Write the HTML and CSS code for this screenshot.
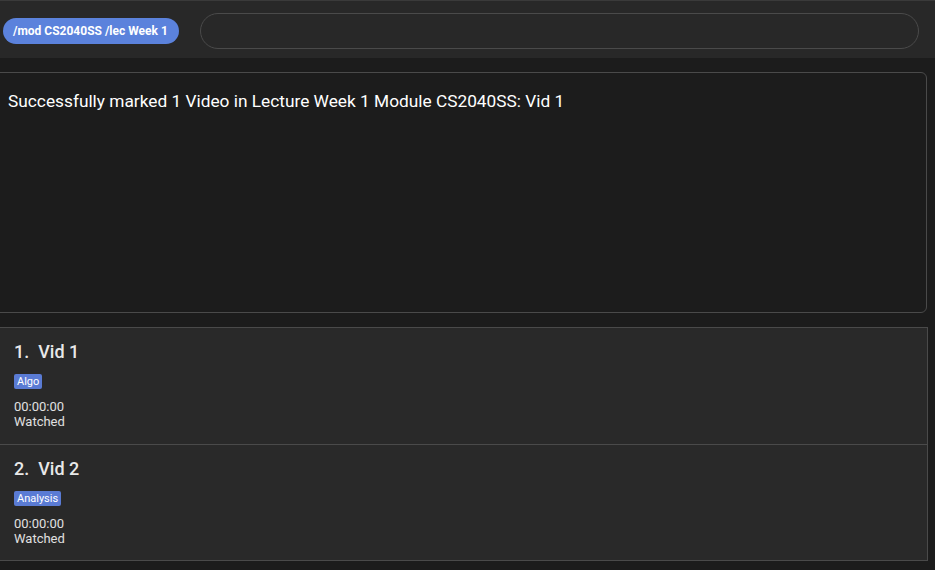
FILE: index.html
```html
<!DOCTYPE html>
<html>
<head>
<meta charset="utf-8">
<link rel="stylesheet" href="styles.css">
</head>
<body>
<div class="topbar">
  <div class="chip">/mod CS2040SS /lec Week 1</div>
  <div class="cmd-input"></div>
</div>
<div class="result">Successfully marked 1 Video in Lecture Week 1 Module CS2040SS: Vid 1</div>
<div class="list">
  <div class="card">
    <div class="title">1.&nbsp;&nbsp;Vid 1</div>
    <div class="tags"><span class="tag">Algo</span></div>
    <div class="meta">00:00:00</div>
    <div class="meta">Watched</div>
  </div>
  <div class="card">
    <div class="title">2.&nbsp;&nbsp;Vid 2</div>
    <div class="tags"><span class="tag">Analysis</span></div>
    <div class="meta">00:00:00</div>
    <div class="meta">Watched</div>
  </div>
</div>
</body>
</html>
```
FILE: styles.css
```css
html, body {
  margin: 0;
  padding: 0;
}
body {
  width: 935px;
  height: 570px;
  overflow: hidden;
  background: #1c1c1c;
  font-family: Roboto, "Liberation Sans", sans-serif;
  color: #ffffff;
}
.topbar {
  height: 57px;
  border-top: 1px solid #3a3a3a;
  background: #282828;
  display: flex;
  align-items: center;
  padding-left: 3px;
  gap: 21px;
  box-sizing: content-box;
}
.chip {
  height: 26px;
  line-height: 26px;
  padding: 0 11px 0 10px;
  border-radius: 13px;
  background: #5b82dc;
  color: #ffffff;
  font-size: 12px;
  font-weight: 700;
  white-space: nowrap;
  position: relative;
  top: 1px;
}
.cmd-input {
  flex: 1;
  height: 34px;
  border: 1.5px solid #4a4a4a;
  border-radius: 18px;
  margin-right: 16px;
  box-sizing: content-box;
  position: relative;
  top: 1px;
}
.result {
  margin: 14px 8px 0 -6px;
  height: 241px;
  box-sizing: border-box;
  border: 1.5px solid #4a4a4a;
  border-radius: 6px;
  padding: 18px 13px;
  font-size: 17.3px;
  line-height: 20px;
  color: #ffffff;
}
.list {
  margin: 14px 7px 0 -1px;
  border: 1px solid #4a4a4a;
  background: #292929;
}
.card {
  height: 116px;
  box-sizing: border-box;
  padding: 13px 14px 0 14px;
}
.card + .card {
  border-top: 1.5px solid #4a4a4a;
}
.title {
  font-size: 18px;
  font-weight: 500;
  line-height: 22px;
  color: #e8e8e8;
}
.tags {
  margin-top: 11px;
  height: 15px;
  display: flex;
}
.tag {
  background: #5a7bd4;
  color: #ffffff;
  font-size: 11px;
  line-height: 15px;
  height: 15px;
  padding: 0 3px;
  border-radius: 2px;
}
.tags + .meta {
  margin-top: 10px;
}
.meta {
  font-size: 13px;
  line-height: 15px;
  color: #e0e0e0;
}
```
